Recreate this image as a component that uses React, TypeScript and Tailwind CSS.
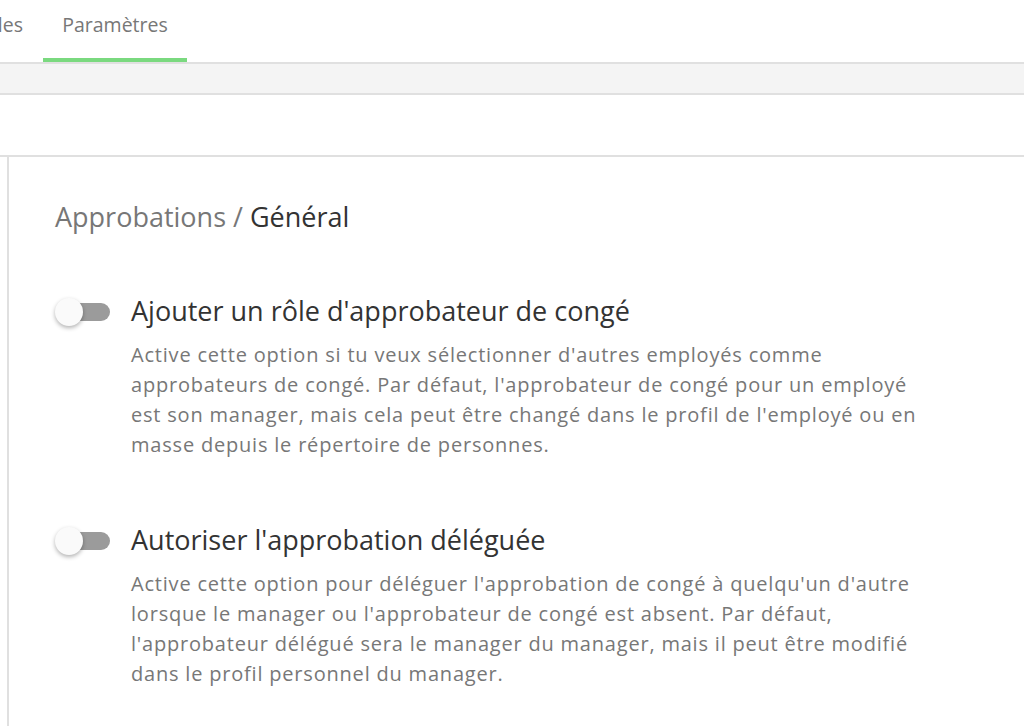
import React, { useState } from 'react';

const font = { fontFamily: '"Open Sans", "Noto Sans", sans-serif' };

const Toggle: React.FC<{ on: boolean; onClick: () => void }> = ({ on, onClick }) => (
  <button onClick={onClick} className="relative mt-[5px] w-[56px] h-[28px] shrink-0">
    <span className={`absolute left-[4px] top-[5px] w-[51px] h-[18px] rounded-full ${on ? 'bg-[#a5e6a8]' : 'bg-[#9b9b9b]'}`} />
    <span
      className={`absolute top-0 w-[28px] h-[28px] rounded-full shadow-[0_2px_4px_rgba(0,0,0,0.3)] ${on ? 'left-[28px] bg-[#6fd374]' : 'left-0 bg-[#fafafa]'}`}
    />
  </button>
);

const App: React.FC = () => {
  const [roles, setRoles] = useState(false);
  const [delegate, setDelegate] = useState(false);

  return (
    <div className="min-h-screen bg-white text-[#333]" style={font}>
      {/* Tabs */}
      <div className="h-[62px] flex">
        <div className="w-[100px] -ml-[57px] pr-[20px] pt-[12px] text-right text-[19.5px] leading-[26px] text-[#777]">Règles</div>
        <div className="h-full w-[144px] flex flex-col items-center justify-between">
          <span className="pt-[12px] text-[19.5px] leading-[26px] text-[#777]">Paramètres</span>
          <span className="h-[4px] w-full bg-[#7ad97f]" />
        </div>
      </div>
      <div className="h-[33px] bg-[#f4f4f4] border-y-2 border-[#e0e0e0]" />
      <div className="h-[62px] border-b-2 border-[#e0e0e0]" />

      <div className="flex">
        <div className="w-[9px] border-r-2 border-[#e0e0e0] min-h-[570px]" />
        <div className="pl-[46px] pt-[43px]">
          <h1 className="text-[27px] leading-[34px] text-[#777]">
            Approbations / <span className="text-[#333]">Général</span>
          </h1>

          <div className="mt-[59px] flex gap-[20px]">
            <Toggle on={roles} onClick={() => setRoles(!roles)} />
            <div>
              <h2 className="text-[27px] leading-[36px] text-[#333]">Ajouter un rôle d'approbateur de congé</h2>
              <p className="mt-[11px] text-[20px] leading-[30px] tracking-[0.8px] text-[#777]">
                Active cette option si tu veux sélectionner d'autres employés comme<br />
                approbateurs de congé. Par défaut, l'approbateur de congé pour un employé<br />
                est son manager, mais cela peut être changé dans le profil de l'employé ou en<br />
                masse depuis le répertoire de personnes.
              </p>
            </div>
          </div>

          <div className="mt-[62px] flex gap-[20px]">
            <Toggle on={delegate} onClick={() => setDelegate(!delegate)} />
            <div>
              <h2 className="text-[27px] leading-[36px] text-[#333]">Autoriser l'approbation déléguée</h2>
              <p className="mt-[11px] text-[20px] leading-[30px] tracking-[0.8px] text-[#777]">
                Active cette option pour déléguer l'approbation de congé à quelqu'un d'autre<br />
                lorsque le manager ou l'approbateur de congé est absent. Par défaut,<br />
                l'approbateur délégué sera le manager du manager, mais il peut être modifié<br />
                dans le profil personnel du manager.
              </p>
            </div>
          </div>
        </div>
      </div>
    </div>
  );
};

export default App;
